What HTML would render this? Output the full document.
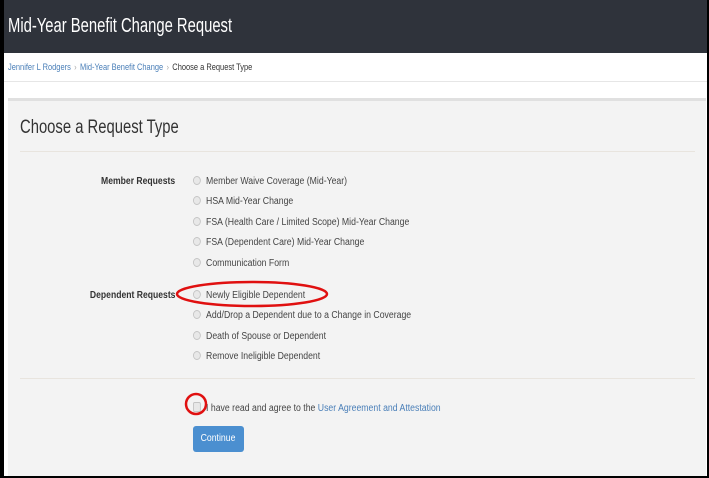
<!DOCTYPE html>
<html><head><style>
*{margin:0;padding:0;box-sizing:border-box}
body{width:709px;height:478px;overflow:hidden;background:#000;font-family:"Liberation Sans",sans-serif;position:relative}
#wrap{position:absolute;left:4px;top:0;width:703px;height:476px;background:#fff}
.sx{display:inline-block;transform-origin:left center;white-space:nowrap}
#hdr{position:absolute;left:0;top:0;width:703px;height:53px;background:#2f333b;color:#fff;font-size:20px;padding:15px 0 0 4px}
#hdr .sx{transform:scaleX(0.74)}
#bc{position:absolute;left:0;top:53px;width:703px;height:29px;border-bottom:1px solid #e6e6e6;font-size:9px;padding:9px 0 0 4px;color:#333}
#bc .sx{transform:scaleX(0.83)}
#bc a{color:#4a7fb8;text-decoration:none}
#bc .s{color:#aaa;margin:0 4px}
#panel{position:absolute;left:4px;top:98px;width:698px;height:378px;background:#f3f3f3;border-top:3px solid #e0e0e0}
h1{position:absolute;left:12px;top:16px;font-weight:normal;font-size:19px;color:#333;white-space:nowrap;transform:scaleX(0.78);transform-origin:left center}
.hr{position:absolute;left:12px;width:675px;height:1px;background:#e8e4de}
.lab{position:absolute;right:531px;font-size:10px;font-weight:bold;color:#333;white-space:nowrap;transform:scaleX(0.86);transform-origin:right center}
.opt{position:absolute;left:185px;font-size:10px;color:#444;white-space:nowrap;transform:scaleX(0.87);transform-origin:left center}
.opt i{display:inline-block;width:9px;height:9px;border-radius:50%;border:1px solid #c4c4c4;background:#e8e8e8;margin-right:6px;vertical-align:-1px}
#btn{position:absolute;left:185px;top:325px;width:51px;height:26px;background:#4b8fd0;border-radius:3px;color:#fff;font-size:10px;text-align:center;line-height:26px}
</style></head><body>
<div id="wrap">
<div id="hdr"><span class="sx">Mid-Year Benefit Change Request</span></div>
<div id="bc"><span class="sx"><a>Jennifer L Rodgers</a><span class="s">›</span><a>Mid-Year Benefit Change</a><span class="s">›</span>Choose a Request Type</span></div>
<div id="panel">
<h1>Choose a Request Type</h1>
<div class="hr" style="top:50px"></div>
<div class="lab" style="top:75px">Member Requests</div>
<div class="opt" style="top:75px"><i></i>Member Waive Coverage (Mid-Year)</div>
<div class="opt" style="top:95px"><i></i>HSA Mid-Year Change</div>
<div class="opt" style="top:116px"><i></i>FSA (Health Care / Limited Scope) Mid-Year Change</div>
<div class="opt" style="top:136px"><i></i>FSA (Dependent Care) Mid-Year Change</div>
<div class="opt" style="top:157px"><i></i>Communication Form</div>
<div class="lab" style="top:189px">Dependent Requests</div>
<div class="opt" style="top:189px"><i></i>Newly Eligible Dependent</div>
<div class="opt" style="top:209px"><i></i>Add/Drop a Dependent due to a Change in Coverage</div>
<div class="opt" style="top:230px"><i></i>Death of Spouse or Dependent</div>
<div class="opt" style="top:250px"><i></i>Remove Ineligible Dependent</div>
<div class="hr" style="top:277px"></div>
<div class="opt" style="top:301px;left:185px"><i style="border-radius:2px;width:9px;height:10px"></i>I have read and agree to the <span style="color:#4a7fb8">User Agreement and Attestation</span></div>
<div id="btn"><span class="sx" style="transform:scaleX(0.87);transform-origin:center">Continue</span></div>
</div>
</div>
<svg style="position:absolute;left:0;top:0" width="709" height="478">
<ellipse cx="252" cy="294" rx="75" ry="12" fill="none" stroke="#e01010" stroke-width="2.5"/>
<circle cx="196" cy="404" r="10" fill="none" stroke="#e01010" stroke-width="2.5"/>
</svg>
</body></html>
